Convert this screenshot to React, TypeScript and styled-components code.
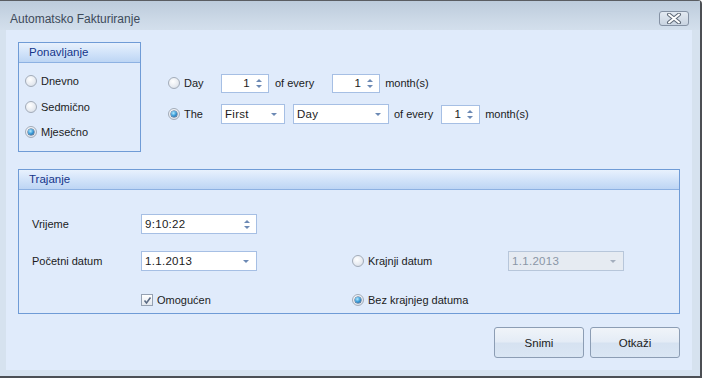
import React from "react";
import styled, { createGlobalStyle } from "styled-components";

const Global = createGlobalStyle`
  html, body {
    margin: 0;
    padding: 0;
    background: #ffffff;
  }
  body {
    font-family: "Liberation Sans", Arial, sans-serif;
    font-size: 11px;
    color: #1b1b1b;
  }
`;

const Window = styled.div`
  width: 702px;
  height: 378px;
  box-sizing: border-box;
  border-top: 1px solid #5a5d62;
  border-right: 2px solid #4c4f54;
  border-bottom: 2px solid #4c4f54;
  border-top-right-radius: 4px;
  background: #d6e2ef;
  display: flex;
  flex-direction: column;
`;

const TitleBar = styled.div`
  height: 29px;
  flex: none;
  display: flex;
  align-items: flex-start;
  justify-content: space-between;
  background: linear-gradient(#bccbdb, #cbd8e6 60%, #d3dfec);
`;

const Title = styled.div`
  font-size: 12px;
  color: #3d4a5a;
  padding: 11px 0 0 10px;
`;

const CloseButton = styled.div`
  width: 30px;
  height: 15px;
  box-sizing: border-box;
  margin: 10px 11px 0 0;
  border: 1px solid #8592a4;
  border-radius: 3px;
  background: linear-gradient(#e3eaf2, #c9d4e1);
  display: flex;
  align-items: center;
  justify-content: center;
`;

const Body = styled.div`
  flex: 1;
  margin: 0 8px 6px 6px;
  background: #e0ebfb;
  padding: 12px 12px 0 12px;
  display: flex;
  flex-direction: column;
`;

const TopRow = styled.div`
  display: flex;
  align-items: flex-start;
`;

const Group = styled.div<{ $w?: number; $h: number; $mt?: number }>`
  width: ${(p) => (p.$w ? `${p.$w}px` : "auto")};
  height: ${(p) => p.$h}px;
  margin-top: ${(p) => p.$mt ?? 0}px;
  box-sizing: border-box;
  border: 1px solid #6f9bd6;
  flex: none;
  display: flex;
  flex-direction: column;
`;

const GroupHeader = styled.div`
  height: 19px;
  flex: none;
  box-sizing: content-box;
  border-bottom: 1px solid #8db1e2;
  background: linear-gradient(#e8f1fd, #d0e2f9 55%, #bdd5f4);
  color: #15358a;
  font-size: 11.5px;
  line-height: 19px;
  padding-left: 10px;
`;

const RadioList = styled.div`
  display: flex;
  flex-direction: column;
  gap: 9.5px;
  padding: 10px 0 0 6px;
`;

const Option = styled.label<{ $w?: number }>`
  display: flex;
  align-items: center;
  height: 16px;
  gap: 4px;
  width: ${(p) => (p.$w ? `${p.$w}px` : "auto")};
  flex: none;
`;

const Radio = styled.span<{ $on?: boolean }>`
  width: 12px;
  height: 12px;
  box-sizing: border-box;
  border-radius: 50%;
  border: 1px solid #a3acb9;
  background: radial-gradient(circle at 40% 35%, #ffffff, #e6eaf0 60%, #c9d1dc);
  display: flex;
  align-items: center;
  justify-content: center;
  flex: none;
  &::after {
    content: "";
    display: ${(p) => (p.$on ? "block" : "none")};
    width: 6px;
    height: 6px;
    border-radius: 50%;
    background: radial-gradient(circle at 40% 35%, #b6ecff, #3a9bd8 50%, #17477e);
    box-shadow: 0 0 0 0.5px #2a4f7c;
  }
`;

const Options = styled.div`
  margin: 31px 0 0 27px;
  display: flex;
  flex-direction: column;
  gap: 11px;
`;

const OptRow = styled.div`
  display: flex;
  align-items: center;
  height: 20px;
`;

const Text = styled.span<{ $ml?: number }>`
  margin-left: ${(p) => p.$ml ?? 0}px;
  white-space: nowrap;
`;

const Field = styled.div<{ $w: number; $ml?: number; $h?: number; $off?: boolean }>`
  width: ${(p) => p.$w}px;
  height: ${(p) => p.$h ?? 20}px;
  margin-left: ${(p) => p.$ml ?? 0}px;
  box-sizing: border-box;
  border: 1px solid ${(p) => (p.$off ? "#b7c6da" : "#a6bfe4")};
  background: ${(p) => (p.$off ? "#e6ebf2" : "#ffffff")};
  color: ${(p) => (p.$off ? "#8a96a6" : "#1b1b1b")};
  display: flex;
  align-items: center;
  flex: none;
  font-size: 11.5px;
`;

const Value = styled.span<{ $right?: boolean }>`
  flex: 1;
  text-align: ${(p) => (p.$right ? "right" : "left")};
  padding: ${(p) => (p.$right ? "0 3px 0 0" : "0 0 0 3px")};
  letter-spacing: 0.3px;
`;

const SpinArrows = styled.div`
  width: 12px;
  display: flex;
  flex-direction: column;
  align-items: center;
  gap: 3px;
  margin-right: 3px;
  &::before,
  &::after {
    content: "";
    width: 0;
    height: 0;
    border-left: 3px solid transparent;
    border-right: 3px solid transparent;
  }
  &::before {
    border-bottom: 3px solid #6c89b4;
  }
  &::after {
    border-top: 3px solid #6c89b4;
  }
`;

const DropArrow = styled.span<{ $off?: boolean }>`
  width: 0;
  height: 0;
  margin-right: 7px;
  border-left: 3px solid transparent;
  border-right: 3px solid transparent;
  border-top: 3px solid ${(p) => (p.$off ? "#a3aebd" : "#6c89b4")};
`;

const Spin = ({ w, ml, value }: { w: number; ml?: number; value: string }) => (
  <Field $w={w} $ml={ml} $h={19}>
    <Value $right>{value}</Value>
    <SpinArrows />
  </Field>
);

const Combo = ({ w, ml, value, off }: { w: number; ml?: number; value: string; off?: boolean }) => (
  <Field $w={w} $ml={ml} $off={off}>
    <Value>{value}</Value>
    <DropArrow $off={off} />
  </Field>
);

const FormGrid = styled.div`
  display: grid;
  grid-template-columns: 109px 116px 95px 156px 116px;
  grid-template-rows: 20px 20px 20px;
  row-gap: 19px;
  align-items: center;
  padding: 24px 0 0 13px;
  & > :nth-child(n + 6) {
    margin-top: -4px;
  }
`;

const Check = styled.span`
  width: 12px;
  height: 12px;
  box-sizing: border-box;
  border: 1px solid #95a1b2;
  background: linear-gradient(#ffffff, #e3e8ef);
  display: flex;
  align-items: center;
  justify-content: center;
  flex: none;
`;

const Buttons = styled.div`
  display: flex;
  justify-content: flex-end;
  gap: 6px;
  margin-top: 13px;
`;

const Button = styled.button`
  width: 90px;
  height: 31px;
  box-sizing: border-box;
  border: 1px solid #8c9db4;
  border-radius: 3px;
  background: linear-gradient(#f0f4f9, #e4ecf6 48%, #d6e2f1 52%, #dae6f4);
  font-family: "Liberation Sans", Arial, sans-serif;
  font-size: 11.5px;
  color: #1b1b1b;
  padding: 0;
`;

export default function App() {
  return (
    <>
      <Global />
      <Window>
        <TitleBar>
          <Title>Automatsko Fakturiranje</Title>
          <CloseButton>
            <svg width="16" height="11" viewBox="0 0 16 11">
              <path d="M3 1.5 L13 9.5 M13 1.5 L3 9.5" stroke="#5f6a78" strokeWidth="4" strokeLinecap="round" />
              <path d="M3 1.5 L13 9.5 M13 1.5 L3 9.5" stroke="#ffffff" strokeWidth="2" strokeLinecap="round" />
            </svg>
          </CloseButton>
        </TitleBar>
        <Body>
          <TopRow>
            <Group $w={123} $h={110}>
              <GroupHeader>Ponavljanje</GroupHeader>
              <RadioList>
                <Option><Radio />Dnevno</Option>
                <Option><Radio />Sedmično</Option>
                <Option><Radio $on />Mjesečno</Option>
              </RadioList>
            </Group>
            <Options>
              <OptRow>
                <Option $w={53}><Radio />Day</Option>
                <Spin w={48} value="1" />
                <Text $ml={6}>of every</Text>
                <Spin w={48} ml={18} value="1" />
                <Text $ml={5}>month(s)</Text>
              </OptRow>
              <OptRow>
                <Option $w={53}><Radio $on />The</Option>
                <Combo w={64} value="First" />
                <Combo w={96} ml={8} value="Day" />
                <Text $ml={5}>of every</Text>
                <Spin w={39} ml={8} value="1" />
                <Text $ml={5}>month(s)</Text>
              </OptRow>
            </Options>
          </TopRow>
          <Group $h={145} $mt={17}>
            <GroupHeader>Trajanje</GroupHeader>
            <FormGrid>
              <Text>Vrijeme</Text>
              <Field $w={116}>
                <Value>9:10:22</Value>
                <SpinArrows />
              </Field>
              <span />
              <span />
              <span />
              <Text>Početni datum</Text>
              <Combo w={116} value="1.1.2013" />
              <span />
              <Option><Radio />Krajnji datum</Option>
              <Combo w={116} value="1.1.2013" off />
              <span />
              <Option>
                <Check>
                  <svg width="9" height="9" viewBox="0 0 9 9">
                    <path d="M1.5 4.5 L3.5 7 L7.5 1.5" fill="none" stroke="#5b6b84" strokeWidth="1.6" />
                  </svg>
                </Check>
                Omogućen
              </Option>
              <span />
              <Option><Radio $on />Bez krajnjeg datuma</Option>
              <span />
            </FormGrid>
          </Group>
          <Buttons>
            <Button>Snimi</Button>
            <Button>Otkaži</Button>
          </Buttons>
        </Body>
      </Window>
    </>
  );
}
